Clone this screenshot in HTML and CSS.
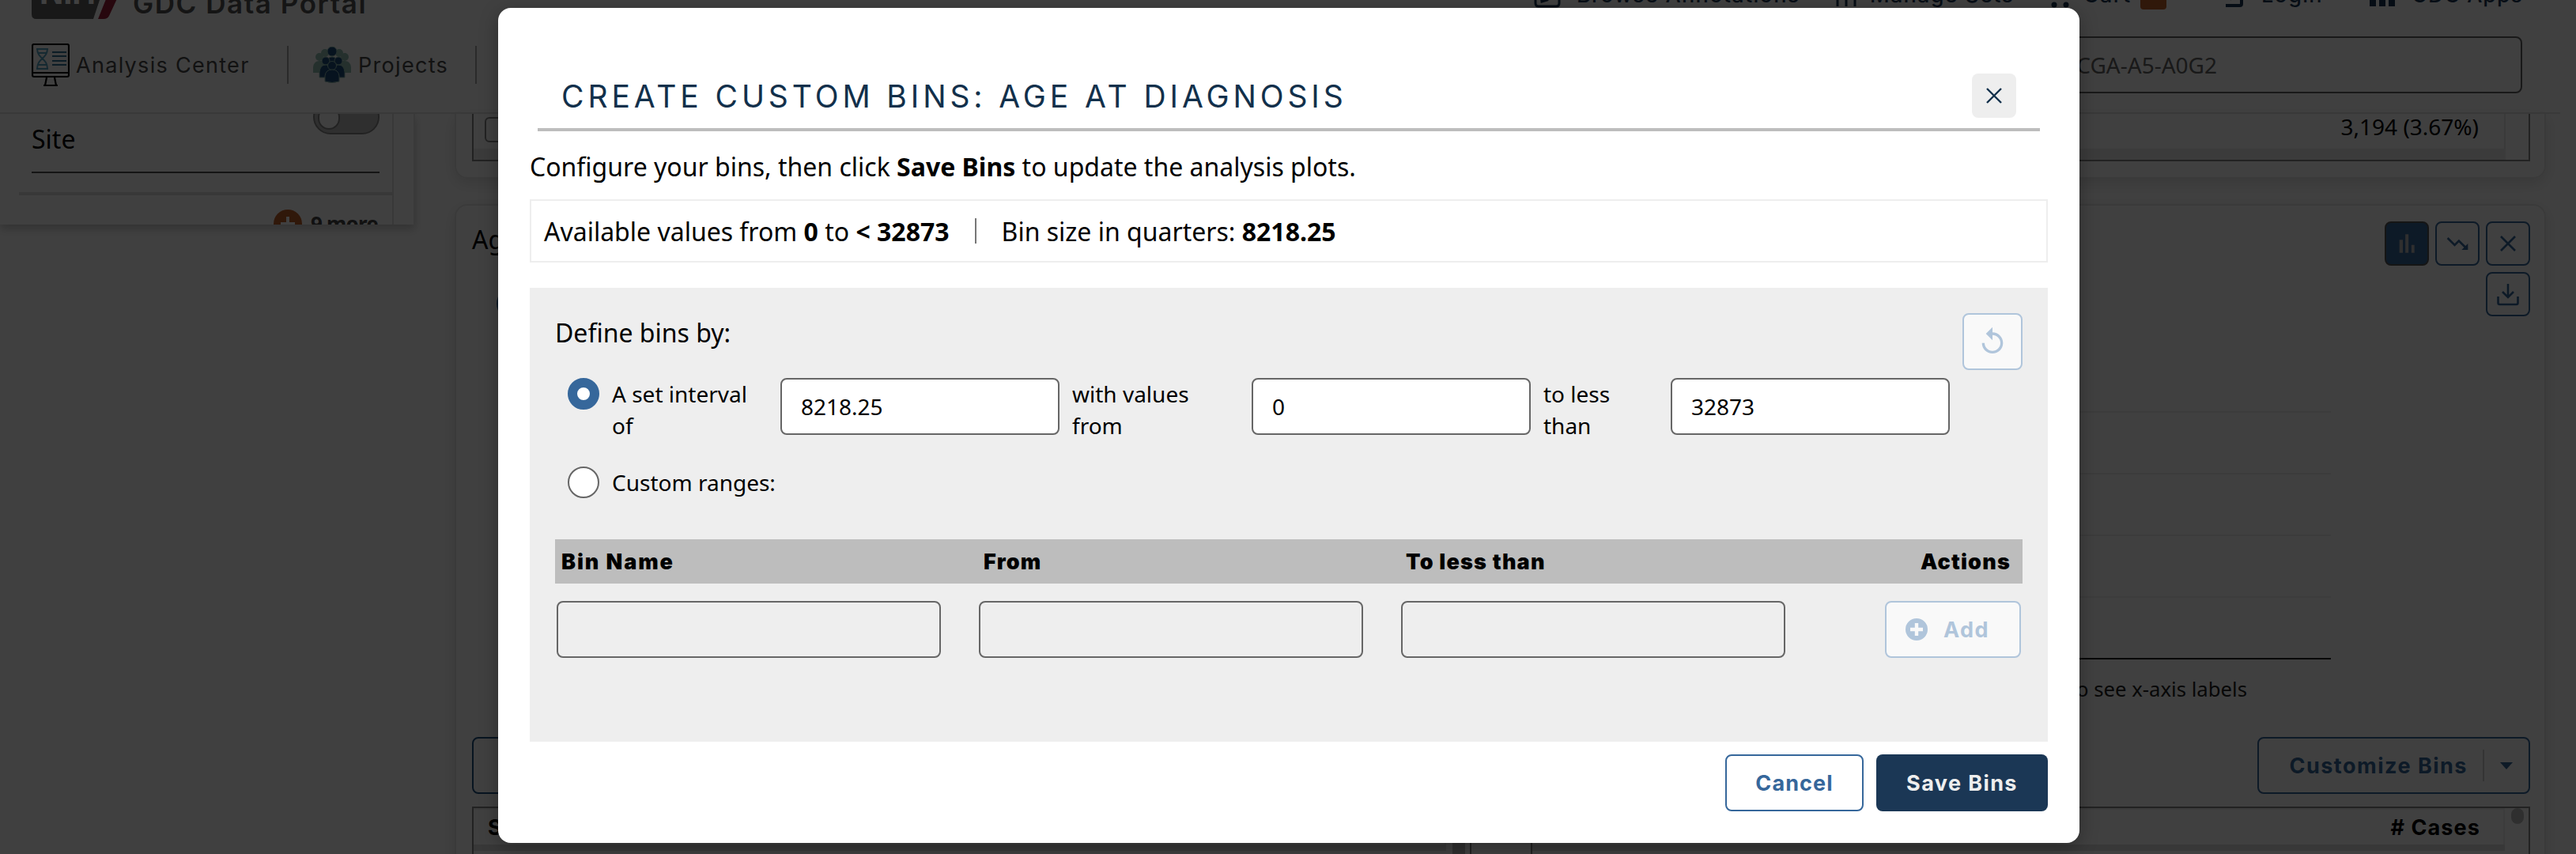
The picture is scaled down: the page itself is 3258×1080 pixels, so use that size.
FILE: index.html
```html
<!DOCTYPE html>
<html lang="en">
<head>
<meta charset="utf-8">
<title>GDC Data Portal</title>
<link rel="stylesheet" href="styles.css">
</head>
<body>
<div class="app">
  <header class="header">
    <div class="header-top">
      <div class="brand">
        <svg class="nih" width="108" height="60" viewBox="0 0 108 60">
          <path d="M0 0H98L78 60H6Q0 60 0 54Z" fill="#606060"/>
          <path d="M100 0H124L98 56Q96 60 91 60H84L108 0Z" fill="#9a1f38"/>
          <text x="10" y="41" class="nih-text" textLength="71" lengthAdjust="spacingAndGlyphs">NIH</text>
        </svg>
        <span class="brand-name">GDC Data Portal</span>
      </div>
      <nav class="top-links">
        <span class="top-link annotations"><svg width="34" height="36" viewBox="0 0 34 36"><path d="M2 2V29Q2 33 6 33H28Q32 33 32 29V2M9 20L10 27L17 25L30 6" fill="none" stroke="currentColor" stroke-width="3"/></svg><span class="t-annotations">Browse Annotations</span></span>
        <span class="top-link sets"><svg width="30" height="36" viewBox="0 0 30 36"><path d="M4 0V33M15 10V33M26 0V33M0 18H8M11 22H19M22 18H30" stroke="currentColor" stroke-width="3"/></svg><span class="t-sets">Manage Sets</span></span>
        <span class="top-link cart"><svg width="30" height="36" viewBox="0 0 30 36"><path d="M0 2H6L10 22H28" fill="none" stroke="currentColor" stroke-width="3"/><circle cx="10" cy="31" r="3.5" fill="currentColor"/><circle cx="25" cy="31" r="3.5" fill="currentColor"/></svg><span class="t-cart">Cart</span><i class="badge"></i></span>
        <span class="top-link login"><svg width="26" height="36" viewBox="0 0 26 36"><path d="M4 32H22Q24 32 24 30V4M0 18H14M9 12L15 18L9 24" fill="none" stroke="currentColor" stroke-width="4"/></svg><span class="t-login">Login</span></span>
        <span class="top-link apps"><svg width="32" height="36" viewBox="0 0 32 36"><path d="M0 25h8v8H0zM12 25h8v8h-8zM24 25h8v8h-8zM0 13h8v8H0zM12 13h8v8h-8zM24 13h8v8h-8z" fill="currentColor"/></svg><span class="t-apps">GDC Apps</span></span>
      </nav>
    </div>
    <div class="header-main">
      <span class="nav-item">
        <svg width="48" height="54" viewBox="0 0 48 54">
          <g fill="none" stroke="#000" stroke-width="2.200"><rect x="1" y="1" width="46" height="41" rx="2"/><path d="M1 37H47M19 43L17 53H31L29 43M15 53H33"/></g>
          <g fill="none" stroke="#56a5c4" stroke-width="2"><path d="M7 6C7 20 20 18 20 32M20 6C20 20 7 18 7 32M6 7H21M8 12H19M8 27H19M6 32H21"/></g>
          <path d="M26 11H44M26 16H44M26 22H44M26 27H44" stroke="#2e6f94" stroke-width="2"/>
        </svg>
        <span class="t-analysis">Analysis Center</span>
      </span>
      <i class="nav-sep"></i>
      <span class="nav-item projects">
        <svg width="48" height="46" viewBox="0 0 48 46">
          <g fill="#93c0b4"><circle cx="15" cy="8" r="5"/><circle cx="33" cy="8" r="5"/><circle cx="8" cy="13" r="5"/><circle cx="40" cy="13" r="5"/><path d="M0 33V26Q1 18 8 18H40Q47 18 48 26V33Z"/></g>
          <g fill="#1d4b7d" stroke="#93c0b4" stroke-width="1"><path d="M18 22V18Q19 13 24 13T30 18V22Z"/><circle cx="24" cy="6" r="6"/><circle cx="16" cy="18" r="5"/><circle cx="32" cy="18" r="5"/><path d="M8 39V32Q9 23 16 23T24 32V39ZM24 39V32Q25 23 32 23T40 32V39Z"/><circle cx="24" cy="24" r="5.5"/><path d="M15 44V37Q16 29 24 29T33 37V44Q24 47 15 44Z"/></g>
        </svg>
        <span class="t-projects">Projects</span>
      </span>
      <i class="nav-sep second"></i>
      <span class="search"><span class="search-text">TCGA-A5-A0G2</span></span>
    </div>
  </header>
  <main class="main">
    <aside class="sidebar">
      <div class="sidebar-inner">
        <div class="facet"><span class="site">Site</span><span class="toggle"><i></i></span></div>
        <div class="facet-line"></div>
        <div class="facet-end"></div>
        <div class="more">
          <svg width="36" height="36" viewBox="0 0 36 36"><circle cx="18" cy="18" r="18" fill="#c0602a"/><path d="M18 9V27M9 18H27" stroke="#fff" stroke-width="4"/></svg>
          <b>9 more</b>
        </div>
      </div>
    </aside>
    <section class="cards">
      <div class="card first">
        <div class="result-table">
          <div class="result-row"><i class="check"></i><span>3,194 (3.67%)</span></div>
          <div class="row-alt"></div>
        </div>
      </div>
      <div class="card second-card">
        <div class="card-head">
          <div><div class="card-title">Age at Diagnosis</div><i class="radio on chart-radio"></i></div>
          <div class="tools">
            <span class="tool active"><svg width="40" height="40" viewBox="0 0 24 24"><path d="M6.400 9.200h2.600V19h-2.600zM10.900 5h2.400v14h-2.400zM15.500 13h2.300v6h-2.300z" fill="#bbb"/></svg></span>
            <span class="tool"><svg width="32" height="32" viewBox="0 0 24 24"><path d="M16 18l2.290-2.290-4.880-4.880-4 4L2 7.410 3.410 6l6 6 4-4 6.300 6.290L22 12v6z" fill="currentColor"/></svg></span>
            <span class="tool"><svg width="20" height="20" viewBox="0 0 20 20"><path d="M1 1L19 19M19 1L1 19" stroke="currentColor" stroke-width="2.600"/></svg></span>
            <span class="tool download"><svg width="28" height="30" viewBox="0 0 28 30"><path d="M14 2V19M7 12L14 19L21 12M1.500 18V26Q1.500 28 3.500 28H24.500Q26.500 28 26.500 26V18" fill="none" stroke="currentColor" stroke-width="2.600"/></svg></span>
          </div>
        </div>
        <div class="chart"><i></i><i></i><i></i><i></i><i class="axis"></i></div>
        <div class="axis-note">to see x-axis labels</div>
        <div class="card-actions">
          <span class="select-btn"></span>
          <span class="customize"><span class="t-customize">Customize Bins</span><i></i><svg width="16" height="9" viewBox="0 0 16 9"><path d="M0 0H16L8 9Z" fill="currentColor"/></svg></span>
        </div>
        <div class="tables">
          <div class="data-table"><div class="data-main"><div class="data-head"><b class="t-select">Select</b></div><div class="data-row"></div></div><div class="track"><i class="long"></i></div></div>
          <div class="data-table"><div class="data-main"><div class="data-head right"><b class="t-cases"># Cases</b></div><div class="data-row"></div></div><div class="track"><i></i></div></div>
        </div>
      </div>
    </section>
  </main>
</div>
<div class="overlay">
  <div class="modal" role="dialog">
    <div class="modal-head">
      <h1>CREATE CUSTOM BINS: AGE AT DIAGNOSIS</h1>
      <button class="close"><svg width="20" height="20" viewBox="0 0 20 20"><path d="M1 1L19 19M19 1L1 19" stroke="currentColor" stroke-width="2.400"/></svg></button>
    </div>
    <p class="intro">Configure your bins, then click <b>Save Bins</b> to update the analysis plots.</p>
    <div class="info"><span>Available values from <b>0</b> to <b>&lt; 32873</b></span><i></i><span>Bin size in quarters: <b>8218.25</b></span></div>
    <div class="panel">
      <div class="panel-head">
        <span class="define">Define bins by:</span>
        <button class="reset"><svg width="40" height="40" viewBox="0 0 24 24"><path d="M12 5V1L7 6l5 5V7c3.310 0 6 2.690 6 6s-2.690 6-6 6-6-2.690-6-6H4c0 4.420 3.580 8 8 8s8-3.580 8-8-3.580-8-8-8z" fill="currentColor"/></svg></button>
      </div>
      <div class="interval">
        <i class="radio on"></i>
        <span class="lbl l1">A set interval<br>of</span><span class="input">8218.25</span>
        <span class="lbl l2">with values<br>from</span><span class="input">0</span>
        <span class="lbl l3">to less<br>than</span><span class="input">32873</span>
      </div>
      <div class="custom"><i class="radio"></i><span class="lbl">Custom ranges:</span></div>
      <div class="bins-head"><b class="t-bin">Bin Name</b><b class="t-from">From</b><b class="t-to">To less than</b><b class="t-actions">Actions</b></div>
      <div class="bins-row">
        <span class="bin-input"></span><span class="bin-input"></span><span class="bin-input"></span>
        <button class="add"><svg width="28" height="28" viewBox="0 0 28 28"><path fill-rule="evenodd" d="M14 0A14 14 0 1 1 14 28A14 14 0 1 1 14 0ZM11.800 6V11.800H6V16.200H11.800V22H16.200V16.200H22V11.800H16.200V6Z" fill="currentColor"/></svg><span class="t-add">Add</span></button>
      </div>
    </div>
    <div class="footer"><button class="cancel"><span class="t-cancel">Cancel</span></button><button class="save"><span class="t-save">Save Bins</span></button></div>
  </div>
</div>
</body>
</html>
```
FILE: styles.css
```css
* { box-sizing: border-box; }
body { margin: 0; width: 3258px; height: 1080px; overflow: hidden; position: relative; background: #fff; color: #000; font-family: "Noto Sans", sans-serif; font-size: 28px; }
i { font-style: normal; display: block; flex: none; }
svg { display: block; flex: none; }
span, b { white-space: nowrap; }
button { font: inherit; margin: 0; padding: 0; display: flex; align-items: center; justify-content: center; border-radius: 8px; }
.app { height: 1080px; overflow: hidden; }

/* header */
.header { width: 3238px; height: 144px; overflow: hidden; border-bottom: 2px solid #e6e6e6; padding: 0 48px 0 40px; font-family: Inter, sans-serif; font-size: 27px; }
.header-top { height: 86px; margin-top: -50px; display: flex; justify-content: space-between; align-items: center; }
.brand { display: flex; align-items: flex-end; gap: 20px; height: 86px; padding-bottom: 12px; }
.nih { overflow: visible; }
.nih-text { font: 700 50px Inter, sans-serif; fill: #fff; }
.brand-name { font-weight: 600; font-size: 35px; line-height: 40px; color: #555; letter-spacing: 1.55px; }
.top-links { display: flex; color: #1b3755; font-weight: 500; letter-spacing: 1.3px; }
.top-link { display: flex; align-items: center; }
.annotations { width: 380px; gap: 20px; }
.sets { width: 268px; gap: 15px; }
.cart { width: 223px; gap: 17px; }
.t-cart { width: 59px; }
.login { width: 186px; gap: 23px; }
.apps { width: 193px; gap: 21px; letter-spacing: .9px; }
.badge { width: 33px; height: 38px; background: #c0602a; border-radius: 4px; margin-left: -4px; }
.header-main { height: 92px; display: flex; align-items: center; color: #484848; letter-spacing: 1.3px; }
.nav-item { display: flex; align-items: center; gap: 8px; width: 323px; }
.nav-item.projects { width: 205px; gap: 9px; }
.nav-sep { width: 2px; height: 48px; background: #a8a8a8; }
.nav-sep + .projects { margin-left: 31px; }
.search { margin-left: auto; width: 1000px; height: 72px; border: 2px solid #666; border-radius: 8px; display: flex; align-items: center; justify-content: flex-end; padding-right: 384px; font-family: "Noto Sans", sans-serif; font-size: 28px; color: #666; letter-spacing: 0; }

/* page body */
.main { display: flex; align-items: flex-start; gap: 50px; }
.sidebar { width: 525px; height: 140px; overflow: hidden; border-right: 2px solid #e8e8e8; box-shadow: 0 6px 10px rgba(0,0,0,.2); }
.sidebar-inner { width: 498px; height: 140px; border-right: 2px solid #ddd; padding-left: 24px; overflow: hidden; }
.facet { display: flex; justify-content: space-between; padding: 0 16px; height: 73px; font-size: 32px; line-height: 63px; }
.toggle { width: 84px; height: 44px; margin-top: -18px; border-radius: 22px; background: #bdbdbd; border: 2px solid #888; }
.toggle i { width: 28px; height: 30px; border: 2px solid #888; border-radius: 14px; background: #fff; margin: 6px 0 0 4px; }
.facet-line { height: 2px; margin: 0 16px; background: #555; }
.facet-end { height: 4px; background: #dedede; margin-top: 24px; }
.more { display: flex; justify-content: flex-end; align-items: center; gap: 11px; padding-right: 21px; margin-top: 18px; }
.more b { font: 700 26px/36px "Noto Sans", sans-serif; color: #444; width: 82px; letter-spacing: -.8px; }
.cards { width: 2645px; }
.card { border: 2px solid #e8e8e8; border-radius: 16px; padding: 0 18px 0 20px; box-shadow: 0 6px 18px rgba(0,0,0,.12); }
.first { height: 82px; border-top: 0; border-radius: 0 0 16px 16px; }
.result-table { height: 60px; border: 2px solid #888; border-top: 0; padding-right: 29px; }
.result-row { height: 44px; padding: 0 32px 0 14px; display: flex; align-items: flex-start; justify-content: space-between; border-right: 2px solid #e5e5e5; line-height: 33px; }
.check { width: 32px; height: 32px; border: 2px solid #888; border-radius: 6px; margin-top: 4px; }
.row-alt { height: 14px; background: #ececec; }
.second-card { margin-top: 32px; padding-top: 20px; height: 900px; }
.card-head { height: 120px; display: flex; justify-content: space-between; }
.card-title { font-size: 32px; line-height: 45px; }
.chart-radio { margin: 39px 0 0 31px; }
.tools { display: grid; grid-template-columns: repeat(3, 56px); grid-auto-rows: 56px; gap: 8px; }
.tool { display: flex; align-items: center; justify-content: center; border: 2px solid #36679b; border-radius: 8px; color: #36679b; }
.tool.active { background: #36679b; border-color: #555; }
.download { grid-column: 3; }
.chart { height: 436px; margin: 0 252px 0 100px; padding-top: 120px; }
.chart i { height: 78px; border-top: 2px solid #eee; }
.chart .axis { height: 3px; border-color: #222; }
.axis-note { height: 96px; padding-right: 358px; text-align: right; font-size: 25.700px; line-height: 70px; padding-top: 1px; color: #222; }
.card-actions { display: flex; justify-content: space-between; }
.select-btn { width: 300px; height: 72px; border: 2px solid #1f5080; border-radius: 8px; }
.customize { width: 345px; height: 72px; border: 2px solid #36679b; border-radius: 8px; color: #36679b; font: 700 27px Inter, sans-serif; letter-spacing: 1.5px; display: flex; align-items: center; justify-content: flex-end; padding-right: 20px; }
.customize i { width: 2px; height: 40px; background: #d0d0d0; margin: 0 20px 0 19px; }
.tables { display: flex; justify-content: space-between; margin-top: 16px; }
.data-table { width: 1264px; height: 200px; border: 2px solid #888; display: flex; justify-content: space-between; }
.data-main { width: 1230px; }
.data-head { height: 46px; padding: 0 29px 0 18px; display: flex; align-items: center; font-family: Inter, sans-serif; font-size: 27px; letter-spacing: 1.1px; border-top: 2px solid #eee; border-right: 2px solid #eee; }
.data-head.right { justify-content: flex-end; }
.data-row { height: 8px; background: #dedfe0; }
.track { width: 28px; padding: 0 6px; }
.track i { width: 16px; height: 20px; background: #bdbdbd; border-radius: 8px; }
.track .long { height: 100px; }

/* dialog */
.overlay { position: absolute; inset: 0; background: rgba(0,0,0,.75); padding: 10px 0 0 630px; }
.modal { width: 2000px; height: 1056px; background: #fff; border-radius: 16px; padding: 67px 40px 0 40px; box-shadow: 0 6px 24px rgba(0,0,0,.3); }
.modal-head { margin: 0 10px; height: 89px; border-bottom: 4px solid #bdbdbd; display: flex; justify-content: space-between; padding: 0 30px 0 30px; }
h1 { margin: 0; font: 400 39px/89px Inter, sans-serif; color: #12304b; letter-spacing: 4.900px; white-space: nowrap; }
.close { width: 56px; height: 56px; margin-top: 16px; border: 0; background: #eee; color: #12304b; }
.intro { margin: 22px 0 18px; height: 46px; font-size: 32px; line-height: 46px; white-space: nowrap; }
.info { height: 80px; border: 2px solid #eee; display: flex; align-items: center; padding: 0 16px; font-size: 32px; }
.info i { width: 2px; height: 32px; background: #777; margin: 0 32px; }
.panel { margin-top: 32px; height: 574px; background: #eee; padding: 32px; }
.panel-head { height: 82px; display: flex; justify-content: space-between; font-size: 32px; line-height: 50px; }
.reset { width: 76px; height: 72px; border: 2px solid #b0c5db; background: #f9f9f9; color: #b0c5db; }
.interval { display: flex; align-items: flex-start; padding-left: 16px; height: 112px; }
.radio { width: 40px; height: 40px; border: 2px solid #666; border-radius: 50%; background: #fff; }
.radio.on { border: 12px solid #36679b; }
.lbl { line-height: 40px; margin-left: 16px; }
.l1 { width: 213px; }
.l2 { width: 227px; }
.l3 { width: 161px; }
.input { width: 353px; height: 72px; border: 2px solid #666; border-radius: 8px; background: #fff; padding-left: 24px; line-height: 69px; }
.custom { display: flex; padding-left: 16px; height: 92px; }
.bins-head { height: 56px; background: #bdbdbd; padding: 0 15px 0 8px; display: grid; grid-template-columns: 534px 534px 1fr auto; align-items: center; font: 700 27px Inter, sans-serif; letter-spacing: 1.2px; }
.t-bin { letter-spacing: 1.9px; }
.bins-row { margin-top: 22px; padding: 0 2px; display: flex; gap: 48px; }
.bin-input { width: 486px; height: 72px; border: 2px solid #666; border-radius: 8px; }
.add { margin-left: auto; width: 172px; height: 72px; border: 2px solid #b0c5db; background: #f9f9f9; color: #b0c5db; gap: 20px; justify-content: flex-start; padding-left: 24px; font: 700 27px Inter, sans-serif; letter-spacing: 1.5px; }
.footer { display: flex; justify-content: flex-end; gap: 16px; margin-top: 16px; font: 700 27px Inter, sans-serif; }
.cancel { width: 175px; height: 72px; border: 2px solid #36679b; background: #fff; color: #36679b; letter-spacing: 1.1px; }
.save { width: 217px; height: 72px; border: 0; background: #1b3755; color: #eee; letter-spacing: 1.4px; }
```
